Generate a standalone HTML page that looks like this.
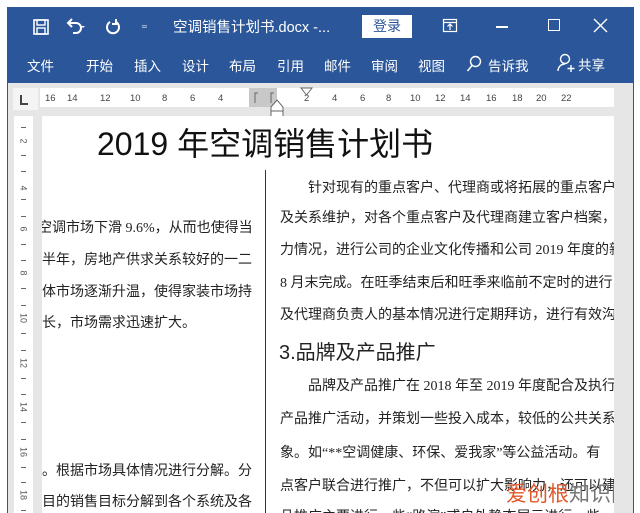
<!DOCTYPE html>
<html style="overflow:hidden;width:640px;height:513px"><head><meta charset="utf-8"><style>
*{margin:0;padding:0;box-sizing:border-box}
body{width:640px;height:513px;background:#fff;position:relative;overflow:hidden;font-family:"Liberation Sans","Noto Sans CJK SC",sans-serif}
.a{position:absolute;white-space:nowrap}
#win{position:absolute;left:7px;top:7px;width:627px;height:506px;background:#e6e6e6;border-left:1px solid #2b579a;border-right:1px solid #2b579a}
#bar{position:absolute;left:7px;top:7px;width:627px;height:76px;background:#2b579a}
.w{color:#fff;font-size:14px}
.t{color:#fff;font-size:13.5px;top:55px}
.r{font-size:9.5px;color:#444;top:93px}
.v{position:absolute;left:0;width:19px;text-align:center;font-size:9px;color:#555;line-height:10px;transform:rotate(90deg)}
.k{position:absolute;left:7px;width:5px;height:1px;background:#666}
.txt{font-size:14px;color:#222;font-family:"Liberation Serif","Noto Sans CJK SC",sans-serif}
</style></head><body>
<div id="win"></div>
<div id="bar"></div>
<svg class="a" style="left:32px;top:18px" width="18" height="18" viewBox="0 0 18 18"><rect x="2" y="2" width="14" height="14" fill="none" stroke="#fff" stroke-width="1.6"/><rect x="5" y="2" width="8" height="5" fill="none" stroke="#fff" stroke-width="1.4"/><rect x="5" y="10" width="8" height="6" fill="none" stroke="#fff" stroke-width="1.4"/></svg>
<svg class="a" style="left:64px;top:17px" width="22" height="20" viewBox="0 0 22 20"><path d="M5 6h7a5 5 0 0 1 0 10h-3" fill="none" stroke="#fff" stroke-width="2"/><path d="M8 2L4 6l4 4" fill="none" stroke="#fff" stroke-width="2"/><path d="M17 9h4l-2 2z" fill="#fff"/></svg>
<svg class="a" style="left:104px;top:17px" width="18" height="20" viewBox="0 0 18 20"><path d="M6 5a6 6 0 1 0 6 0" fill="none" stroke="#fff" stroke-width="2"/><path d="M12 2v5h-4" fill="none" stroke="#fff" stroke-width="2"/></svg>
<div class="a w" style="left:141px;top:17px;font-size:13px">₌</div>
<div class="a w" style="left:173px;top:16px;font-size:14.5px">空调销售计划书.docx -...</div>
<div class="a" style="left:362px;top:15px;width:50px;height:23px;background:#fff;color:#2b579a;font-size:14px;text-align:center;line-height:23px">登录</div>
<svg class="a" style="left:442px;top:18px" width="16" height="16" viewBox="0 0 16 16"><rect x="1.5" y="1.5" width="13" height="12" fill="none" stroke="#fff" stroke-width="1.2"/><path d="M1.5 4.5h13M8 6v6M5.5 8.5L8 6l2.5 2.5" fill="none" stroke="#fff" stroke-width="1.2"/></svg>
<div class="a" style="left:496px;top:26px;width:12px;height:1.5px;background:#fff"></div>
<div class="a" style="left:548px;top:19px;width:12px;height:12px;border:1.5px solid #fff"></div>
<svg class="a" style="left:593px;top:18px" width="15" height="15" viewBox="0 0 15 15"><path d="M1 1l13 13M14 1L1 14" stroke="#fff" stroke-width="1.4"/></svg>
<div class="a t" style="left:27px">文件</div>
<div class="a t" style="left:86px">开始</div>
<div class="a t" style="left:134px">插入</div>
<div class="a t" style="left:182px">设计</div>
<div class="a t" style="left:229px">布局</div>
<div class="a t" style="left:277px">引用</div>
<div class="a t" style="left:324px">邮件</div>
<div class="a t" style="left:371px">审阅</div>
<div class="a t" style="left:418px">视图</div>
<svg class="a" style="left:466px;top:55px" width="16" height="18" viewBox="0 0 16 18"><circle cx="9.5" cy="6.5" r="5" fill="none" stroke="#fff" stroke-width="1.4"/><path d="M6 10.5L1.5 16" stroke="#fff" stroke-width="1.5"/></svg>
<div class="a t" style="left:488px">告诉我</div>
<svg class="a" style="left:557px;top:53px" width="20" height="20" viewBox="0 0 20 20"><circle cx="8" cy="6" r="4.5" fill="none" stroke="#fff" stroke-width="1.4"/><path d="M1 18c0-4 3-7 7-7" fill="none" stroke="#fff" stroke-width="1.4"/><path d="M14 12v7M10.5 15.5h7" stroke="#fff" stroke-width="1.4"/></svg>
<div class="a t" style="left:578px;top:54px">共享</div>
<div class="a" style="left:13px;top:88px;width:25px;height:22px;background:#f4f4f4"></div>
<div class="a" style="left:20px;top:95px;width:8px;height:10px;border-left:2px solid #444;border-bottom:2px solid #444"></div>
<div class="a" style="left:40px;top:88px;width:574px;height:19px;background:#fff"></div>
<div class="a" style="left:249px;top:88px;width:28px;height:19px;background:#c8c8c8"></div>
<div class="a r" style="left:45px">16</div><div class="a r" style="left:67px">14</div><div class="a r" style="left:100px">12</div><div class="a r" style="left:130px">10</div><div class="a r" style="left:162px">8</div><div class="a r" style="left:190px">6</div><div class="a r" style="left:218px">4</div>
<div class="a r" style="left:304px">2</div><div class="a r" style="left:332px">4</div><div class="a r" style="left:360px">6</div><div class="a r" style="left:386px">8</div><div class="a r" style="left:410px">10</div><div class="a r" style="left:435px">12</div><div class="a r" style="left:460px">14</div><div class="a r" style="left:486px">16</div><div class="a r" style="left:512px">18</div><div class="a r" style="left:536px">20</div><div class="a r" style="left:561px">22</div>
<svg class="a" style="left:252px;top:86px" width="70" height="32" viewBox="0 0 70 32"><path d="M3 17V7h3M19 17V7h3" fill="none" stroke="#666" stroke-width="1"/><path d="M49 2h11l-5.5 7z" fill="#fff" stroke="#666"/><path d="M19 21l6-7 6 7v4H19z" fill="#fff" stroke="#666"/><rect x="19" y="25" width="12" height="6" fill="#fff" stroke="#666"/></svg>
<div class="a" style="left:14px;top:116px;width:19px;height:397px;background:#fff;overflow:hidden">
<div class="k" style="top:11px"></div><div class="v" style="top:20px">2</div><div class="k" style="top:39px"></div>
<div class="k" style="top:55px"></div><div class="v" style="top:67px">4</div><div class="k" style="top:83px"></div>
<div class="k" style="top:100px"></div><div class="v" style="top:108px">6</div><div class="k" style="top:128px"></div>
<div class="k" style="top:144px"></div><div class="v" style="top:152px">8</div><div class="k" style="top:172px"></div>
<div class="k" style="top:189px"></div><div class="v" style="top:197px">10</div><div class="k" style="top:217px"></div>
<div class="k" style="top:234px"></div><div class="v" style="top:242px">12</div><div class="k" style="top:262px"></div>
<div class="k" style="top:278px"></div><div class="v" style="top:286px">14</div><div class="k" style="top:306px"></div>
<div class="k" style="top:323px"></div><div class="v" style="top:331px">16</div><div class="k" style="top:351px"></div>
<div class="k" style="top:366px"></div><div class="v" style="top:374px">18</div><div class="k" style="top:394px"></div>
</div>
<div class="a" style="left:42px;top:116px;width:572px;height:397px;background:#fff;overflow:hidden">
<div class="a" style="left:55px;top:3px;font-size:32px;color:#111;font-family:'Liberation Sans','Noto Sans CJK SC',sans-serif">2019 年空调销售计划书</div>
<div class="a" style="left:223px;top:54px;width:1px;height:343px;background:#333"></div>
<div class="a txt" style="left:-4px;top:101px;width:218px;overflow:hidden">空调市场下滑 9.6%，从而也使得当</div>
<div class="a txt" style="left:0;top:133px">半年，房地产供求关系较好的一二</div>
<div class="a txt" style="left:0;top:165px">体市场逐渐升温，使得家装市场持</div>
<div class="a txt" style="left:0;top:196px">长，市场需求迅速扩大。</div>
<div class="a txt" style="left:0;top:344px">。根据市场具体情况进行分解。分</div>
<div class="a txt" style="left:0;top:375px">目的销售目标分解到各个系统及各</div>
<div class="a txt" style="left:266px;top:61px">针对现有的重点客户、代理商或将拓展的重点客户</div>
<div class="a txt" style="left:238px;top:91px">及关系维护，对各个重点客户及代理商建立客户档案，</div>
<div class="a txt" style="left:238px;top:123px">力情况，进行公司的企业文化传播和公司 2019 年度的新</div>
<div class="a txt" style="left:238px;top:156px">8 月末完成。在旺季结束后和旺季来临前不定时的进行</div>
<div class="a txt" style="left:238px;top:188px">及代理商负责人的基本情况进行定期拜访，进行有效沟</div>
<div class="a" style="left:237px;top:220px;font-size:20px;color:#222">3.品牌及产品推广</div>
<div class="a txt" style="left:266px;top:259px">品牌及产品推广在 2018 年至 2019 年度配合及执行</div>
<div class="a txt" style="left:238px;top:292px">产品推广活动，并策划一些投入成本，较低的公共关系</div>
<div class="a txt" style="left:238px;top:326px">象。如“**空调健康、环保、爱我家”等公益活动。有</div>
<div class="a txt" style="left:238px;top:359px">点客户联合进行推广，不但可以扩大影响力，还可以建</div>
<div class="a txt" style="left:238px;top:390px">品推广主要进行一些“路演”或户外静态展示进行一些</div>
<div class="a" style="left:464px;top:366px;font-size:21px;line-height:26px"><span style="color:#e2572a">爱创根</span><span style="color:#777">知识网</span></div>
</div>
</body></html>
